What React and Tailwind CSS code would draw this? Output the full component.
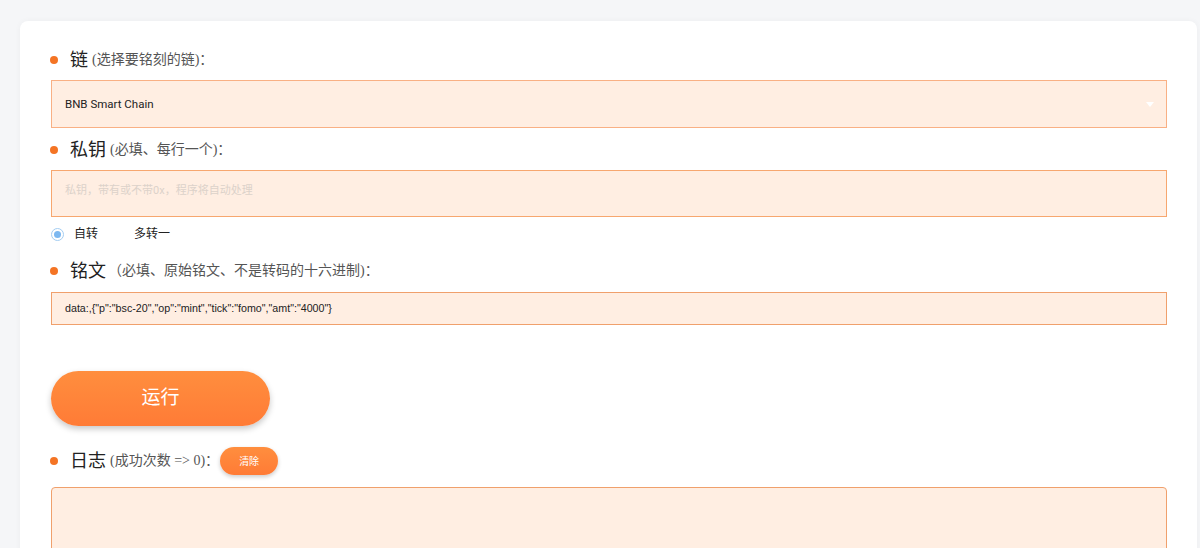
import React from "react";

const serif = { fontFamily: '"Liberation Serif", "Noto Sans CJK SC", serif' };
const sans = '[font-family:Roboto,"Noto_Sans_CJK_SC",sans-serif]';

function Heading({ main, sub, extra, className = "", subGap = "ml-[4px]" }) {
  return (
    <div className={`flex items-center h-[28px] ${className}`}>
      <span className="shrink-0 w-[8px] h-[8px] rounded-full bg-[#f47424] ml-[-1px] mr-[12px]" />
      <span className="text-[18px] text-[#222] leading-none" style={serif}>{main}</span>
      <span className={`text-[14px] text-[#555] leading-none ${subGap}`} style={serif}>{sub}</span>
      {extra}
    </div>
  );
}

export default function App() {
  return (
    <div className="w-[1200px] h-[548px] bg-[#f5f6f8] overflow-hidden pt-[21px]">
      <div className="ml-[20px] w-[1177px] h-[600px] bg-white rounded-[8px] shadow-[0_0_6px_rgba(0,0,0,0.04)] pl-[31px] pt-[25px]">
        <Heading main="链" sub="(选择要铭刻的链)：" />
        <div className="mt-[6px] w-[1116px] h-[48px] bg-[#ffeee2] border border-[#f9b084] flex items-center justify-between pl-[13px] pr-[12px]">
          <span className="text-[11.5px] text-[#222] [font-family:Roboto,sans-serif] mt-[1px]">BNB Smart Chain</span>
          <svg width="8" height="5" viewBox="0 0 8 5"><path d="M0 0 L8 0 L4 5 Z" fill="#ffffff" /></svg>
        </div>

        <Heading main="私钥" sub="(必填、每行一个)：" className="mt-[8px]" />
        <div className="mt-[6px] w-[1116px] h-[47px] bg-[#ffeee2] border border-[#f7a76f] pl-[13px] pt-[5px]">
          <span className={`text-[11px] text-[#dcd2ca] ${sans}`}>私钥，带有或不带0x，程序将自动处理</span>
        </div>

        <div className="mt-[9px] h-[16px] flex items-center">
          <span className="w-[13px] h-[13px] rounded-full border border-[#a3cdf2] flex items-center justify-center">
            <span className="w-[7px] h-[7px] rounded-full bg-[#7cb8f0]" />
          </span>
          <span className={`ml-[10px] text-[12px] text-[#222] ${sans}`}>自转</span>
          <span className={`ml-[36px] text-[12px] text-[#222] ${sans}`}>多转一</span>
        </div>

        <Heading main="铭文" sub="（必填、原始铭文、不是转码的十六进制)：" subGap="ml-[2px]" className="mt-[15px]" />
        <div className="mt-[7px] w-[1116px] h-[33px] bg-[#ffeee2] border border-[#f0a06c] flex items-center pl-[13px]">
          <span className="text-[10.7px] text-[#222] [font-family:'Liberation_Sans',Arial,sans-serif]">{'data:,{"p":"bsc-20","op":"mint","tick":"fomo","amt":"4000"}'}</span>
        </div>

        <button className="mt-[46px] w-[219px] h-[55px] rounded-full bg-[linear-gradient(to_bottom,#ff8e3e,#ff7b36)] shadow-[0_3px_6px_rgba(0,0,0,0.22)] text-white text-[19px] block" style={serif}>
          运行
        </button>

        <Heading
          main="日志"
          sub="(成功次数 => 0)："
          className="mt-[21px]"
          extra={
            <button className="ml-[1px] w-[58px] h-[28px] rounded-full bg-[linear-gradient(to_bottom,#ff8e3e,#ff7b36)] shadow-[0_2px_4px_rgba(0,0,0,0.2)] text-white text-[10px]" style={serif}>
              清除
            </button>
          }
        />
        <div className="mt-[12px] w-[1116px] h-[100px] bg-[#ffeee2] border border-[#f0a06c] rounded-[4px]" />
      </div>
    </div>
  );
}
